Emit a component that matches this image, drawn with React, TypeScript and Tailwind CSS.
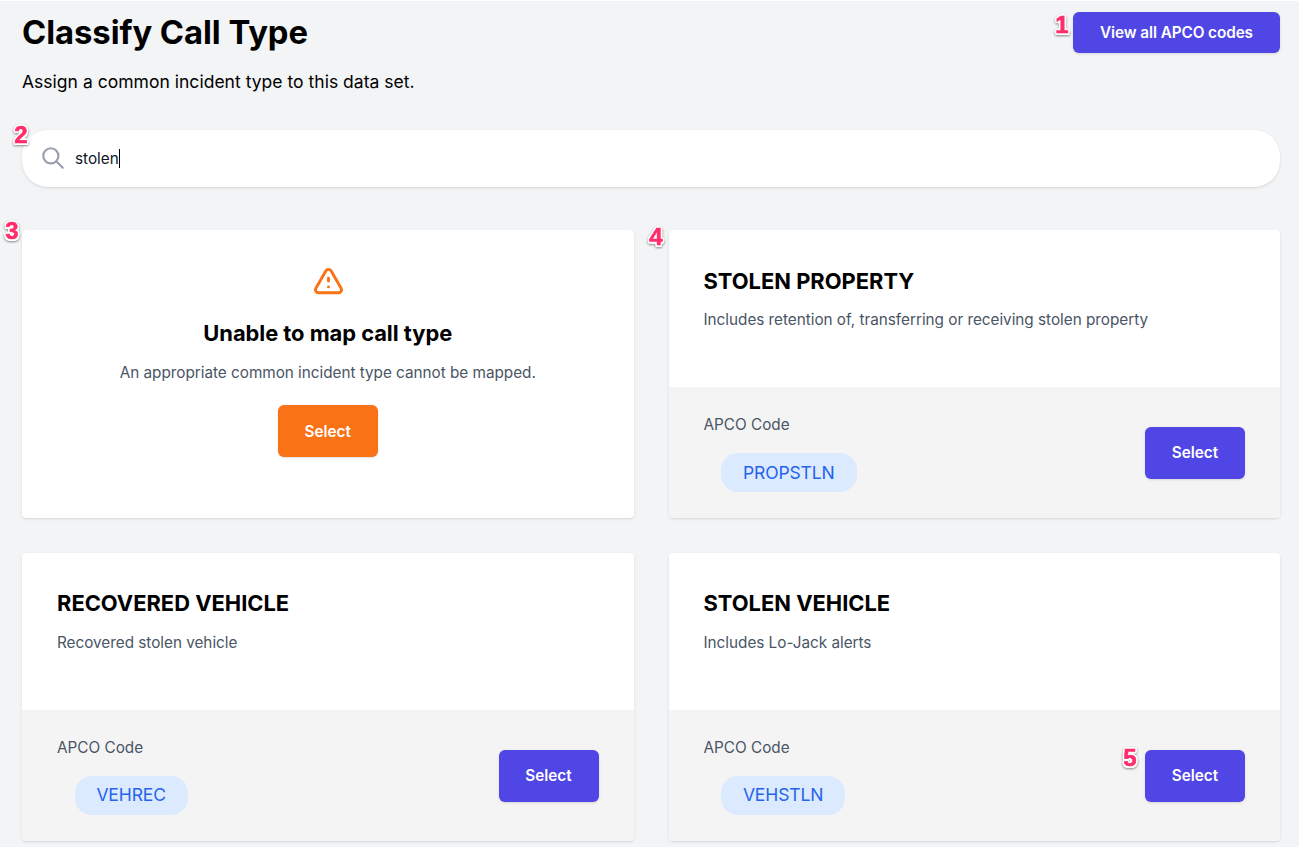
import React from "react";

type CallType = { title: string; description: string; code: string; marker?: string };

function Marker({ value, className }: { value: string; className: string }) {
  return (
    <span
      className={`pointer-events-none absolute flex h-8 w-6 items-center justify-center font-['Liberation_Sans',sans-serif] text-[24px] leading-none font-bold text-[#ff2d6b] [-webkit-text-stroke:0.6px_#ff2d6b] [filter:drop-shadow(0_1.5px_1px_rgba(0,0,0,0.45))] [text-shadow:2px_0_0_#fff,-2px_0_0_#fff,0_2px_0_#fff,0_-2px_0_#fff,1.5px_1.5px_0_#fff,-1.5px_1.5px_0_#fff,1.5px_-1.5px_0_#fff,-1.5px_-1.5px_0_#fff] ${className}`}
    >
      {value}
    </span>
  );
}

function CallTypeCard({ title, description, code, marker }: CallType) {
  return (
    <div className="flex h-[287.8px] flex-col rounded bg-white shadow">
      <div className="h-[157px] px-[35px] pt-[35.6px]">
        <h2 className="text-[21.9px] leading-[31px] font-bold text-black">{title}</h2>
        <p className="mt-[12.5px] text-[15.3px] leading-[22px] tracking-[-0.02px] text-gray-600">{description}</p>
      </div>
      <div className="flex flex-1 items-center justify-between rounded-b bg-[#f4f4f4] px-[35px] pt-px">
        <div className="flex flex-col items-start">
          <span className="text-[15.3px] leading-[22px] text-gray-600">APCO Code</span>
          <span className="mt-[17px] ml-[17.5px] flex h-[39px] items-center rounded-[17px] bg-[#dbeafe] px-[21.9px] pt-[0.7px] text-[17.5px] tracking-[-0.1px] text-[#2563eb]">
            {code}
          </span>
        </div>
        <div className="relative">
          {marker && <Marker value={marker} className="-top-2 -left-[27px]" />}
          <button className="h-[52px] w-[100px] rounded-md bg-[#4f46e5] pt-px text-[15.3px] font-semibold text-white shadow-sm">
            Select
          </button>
        </div>
      </div>
    </div>
  );
}

export default function App() {
  return (
    <main className="h-[847px] overflow-hidden border-t border-white bg-[#f3f4f6] pt-[11px] pr-[19px] pl-[22px] font-['Inter',sans-serif]">
      <header className="flex items-start justify-between">
        <div>
          <h1 className="text-[32.8px] leading-[40px] font-bold tracking-[-0.06px] text-black">Classify Call Type</h1>
          <p className="mt-[17px] text-[17.5px] leading-[26px] tracking-[0.02px] text-black">Assign a common incident type to this data set.</p>
        </div>
        <div className="relative">
          <Marker value="1" className="-top-[3px] -left-[23px]" />
          <button className="h-[41px] w-[207px] rounded-md bg-[#4f46e5] pt-px text-[15.3px] font-semibold tracking-[-0.08px] text-white shadow-sm">
            View all APCO codes
          </button>
        </div>
      </header>

      <div className="relative mt-[35px] flex h-[57px] items-center rounded-[26px] bg-white pl-[18px] shadow">
        <Marker value="2" className="-top-[11px] -left-[13px]" />
        <svg className="mb-px size-[26px] text-gray-400" viewBox="0 0 24 24" fill="none" stroke="currentColor" strokeWidth="2" strokeLinecap="round" strokeLinejoin="round">
          <path d="M21 21l-6-6m2-5a7 7 0 11-14 0 7 7 0 0114 0z" />
        </svg>
        <span className="ml-[9px] pt-0.5 text-[15.3px] text-gray-900">stolen</span>
        <span className="h-[19px] w-px bg-black" />
      </div>

      <div className="relative mt-[43px] grid grid-cols-2 gap-[35px]">
        <Marker value="3" className="-top-[15px] -left-[22px]" />
        <Marker value="4" className="-top-[9px] left-[622px]" />
        <div className="flex h-[287.8px] flex-col items-center rounded bg-white pt-[35px] shadow">
          <svg className="ml-px size-[35px] text-[#f97316]" viewBox="0 0 24 24" fill="none" stroke="currentColor" strokeWidth="2" strokeLinecap="round" strokeLinejoin="round">
            <path d="M12 9v2m0 4h.01m-6.938 4h13.856c1.54 0 2.502-1.667 1.732-3L13.732 4c-.77-1.333-2.694-1.333-3.464 0L3.34 16c-.77 1.333.192 3 1.732 3z" />
          </svg>
          <h2 className="mt-[18px] text-[21.9px] leading-[31px] font-bold tracking-[-0.04px] text-black">Unable to map call type</h2>
          <p className="mt-[13px] text-[15.3px] leading-[22px] tracking-[-0.02px] text-gray-600">An appropriate common incident type cannot be mapped.</p>
          <button className="mt-[21px] h-[52px] w-[100px] rounded-md bg-[#f97316] pt-0.5 text-[15.3px] font-semibold text-white shadow-sm">
            Select
          </button>
        </div>
        <CallTypeCard title="STOLEN PROPERTY" description="Includes retention of, transferring or receiving stolen property" code="PROPSTLN" />
        <CallTypeCard title="RECOVERED VEHICLE" description="Recovered stolen vehicle" code="VEHREC" />
        <CallTypeCard title="STOLEN VEHICLE" description="Includes Lo-Jack alerts" code="VEHSTLN" marker="5" />
      </div>
    </main>
  );
}
